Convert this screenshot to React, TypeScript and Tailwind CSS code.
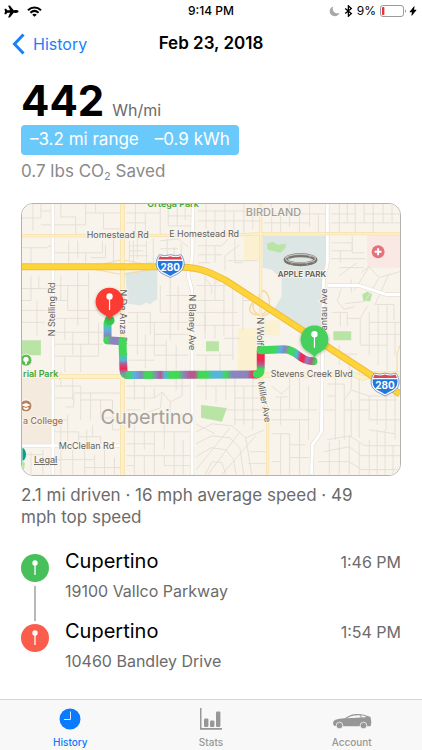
import React, { useState } from "react";
import { IoAirplane, IoMoon, IoFlash } from "react-icons/io5";

type Tab = "History" | "Stats" | "Account";

type Stop = {
  city: string;
  address: string;
  time: string;
  color: string;
};

const stops: Stop[] = [
  { city: "Cupertino", address: "19100 Vallco Parkway", time: "1:46 PM", color: "bg-[#47c05b]" },
  { city: "Cupertino", address: "10460 Bandley Drive", time: "1:54 PM", color: "bg-[#fc5c4b]" },
];

const StatusBar: React.FC = () => (
  <div className="grid h-[22px] grid-cols-[1fr_auto_1fr] items-center px-1 text-[12px]">
    <div className="flex items-center gap-2">
      <IoAirplane size={15} />
      <svg width="15" height="11" viewBox="0 0 15 11" fill="none" stroke="black" strokeWidth="2">
        <path d="M1 4.2C4.8.6 10.2.6 14 4.2" />
        <path d="M3.4 6.8c2.5-2.3 5.7-2.3 8.2 0" />
        <path d="M7.5 10.8 5.2 8.7c1.4-1.2 3.2-1.2 4.6 0z" fill="black" stroke="none" />
      </svg>
    </div>
    <div className="font-medium">9:14 PM</div>
    <div className="flex items-center justify-end gap-1">
      <IoMoon size={11} className="text-[#a8a8a8]" />
      <svg width="9" height="12" viewBox="0 0 9 12" fill="none" stroke="black" strokeWidth="1.3">
        <path d="M1.2 3.4 7.3 8.6 4.4 11.2V.8l2.9 2.6L1.2 8.6" />
      </svg>
      <span>9%</span>
      <div className="flex items-center gap-px">
        <svg width="27" height="12" viewBox="0 0 27 12">
          <rect x=".5" y=".5" width="23" height="11" rx="2.5" fill="none" stroke="#9a9a9a" />
          <rect x="2" y="2" width="2.4" height="8" rx=".8" fill="#e8333c" />
          <path d="M25 4.2c1.4.6 1.4 3 0 3.6z" fill="#9a9a9a" />
        </svg>
        <IoFlash size={10} />
      </div>
    </div>
  </div>
);

const PinGlyph: React.FC = () => (
  <svg width="8" height="16" viewBox="0 0 8 16">
    <circle cx="4" cy="3" r="2.7" fill="white" />
    <path d="M4 5v10" stroke="white" strokeWidth="1.3" />
    <path d="M3 3.6a1.2 1.2 0 0 1 .2-1.6" stroke="#ddd" strokeWidth=".5" fill="none" />
  </svg>
);

const MapPin: React.FC<{ x: number; y: number; color: string }> = ({ x, y, color }) => (
  <g transform={`translate(${x} ${y})`}>
    <path
      d="M0 19C-1.500 15-4 14.200-6.800 12.400A14 14 0 1 1 6.800 12.400C4 14.200 1.500 15 0 19z"
      fill={color}
      filter="url(#pinShadow)"
    />
    <circle cy="-5" r="3.200" fill="white" />
    <path d="M0-3V8.500" stroke="white" strokeWidth="1.200" />
  </g>
);

const Shield: React.FC<{ x: number; y: number }> = ({ x, y }) => (
  <g transform={`translate(${x} ${y})`}>
    <path
      d="M-11-11Q-5.500-9 0-11 5.500-9 11-11C15-5 15 1 11.500 5 8.500 8.500 4 9.500 0 12-4 9.500-8.500 8.500-11.500 5-15 1-15-5-11-11z"
      fill="white"
      stroke="#5e86c2"
      strokeWidth=".8"
    />
    <path d="M-10.500-9.500Q-5-7.800 0-9.500 5-7.800 10.500-9.500L12-6.200H-12z" fill="#d9475a" />
    <path d="M-12.400-4.800H12.400C13 0 11.500 3.500 8.500 5.600 5.500 7.500 3 8.500 0 10.300-3 8.500-5.500 7.500-8.500 5.600-11.500 3.500-13 0-12.400-4.800z" fill="#2277dc" />
    <text y="5" textAnchor="middle" fontSize="10" fontWeight="700" fill="white">280</text>
  </g>
);

// stops are [offset, color] pairs along the drawn direction
const RouteGradient: React.FC<{
  id: string;
  from: [number, number];
  to: [number, number];
  stops: [number, string][];
}> = ({ id, from, to, stops }) => (
  <linearGradient id={id} gradientUnits="userSpaceOnUse" x1={from[0]} y1={from[1]} x2={to[0]} y2={to[1]}>
    {stops.map(([offset, color]) => (
      <stop key={offset} offset={offset} stopColor={color} />
    ))}
  </linearGradient>
);

const G = "#3fd957";
const B = "#56b4e0";
const P = "#8c84be";
const M = "#b8588c";
const R = "#f02850";

const RouteMap: React.FC = () => (
  <svg
    viewBox="21 203 380 272"
    className="block h-auto w-full bg-[#f8f4ec]"
    role="img"
    aria-label="Map of the route through Cupertino"
    fontFamily="Inter, sans-serif"
  >
    <defs>
      <filter id="pinShadow" x="-30%" y="-30%" width="160%" height="160%">
        <feDropShadow dx="0" dy="1" stdDeviation="1.500" floodOpacity=".3" />
      </filter>
      <RouteGradient id="r1" from={[107, 316]} to={[107, 342]} stops={[[0, G], [0.25, G], [0.5, B], [0.75, P], [0.9, P], [1, G]]} />
      <RouteGradient id="r2" from={[106, 341]} to={[122, 341]} stops={[[0, G], [0.3, P], [0.8, P], [1, G]]} />
      <RouteGradient id="r3" from={[123, 338]} to={[123, 376]} stops={[[0, G], [0.4, G], [0.58, B], [0.68, M], [0.8, R], [0.92, P], [1, G]]} />
      <RouteGradient
        id="r4"
        from={[123, 375]}
        to={[261, 375]}
        stops={[[0, P], [0.03, G], [0.08, B], [0.13, P], [0.16, G], [0.2, G], [0.24, P], [0.27, M], [0.3, B], [0.34, G], [0.4, G], [0.44, P], [0.49, M], [0.52, M], [0.55, G], [0.6, G], [0.66, B], [0.7, B], [0.75, G], [0.79, P], [0.9, P], [0.95, R], [0.97, R], [1, G]]}
      />
      <RouteGradient id="r5" from={[261, 376]} to={[261, 347]} stops={[[0, G], [0.25, G], [0.4, M], [0.55, R], [0.75, R], [0.9, P], [1, G]]} />
      <RouteGradient id="r6" from={[261, 349]} to={[316, 362]} stops={[[0, G], [0.25, G], [0.33, B], [0.42, P], [0.5, G], [0.57, G], [0.65, B], [0.73, R], [0.78, R], [0.84, P], [0.92, M], [1, G]]} />
    </defs>

    {/* land areas */}
    <path d="M21 378H50V446H21z" fill="#f4ebde" />
    <path d="M125 272 157 267V299L153 301 150 304 146 302 140 305 127 303z" fill="#dbe6e5" />
    <path d="M263 235H328V265L323 276 325 328 302 328 274 309 282 296V278L272 269 263 267z" fill="#dbe6e5" />
    <path d="M244 235H260V260H244zM264 320H280V336L264 334zM238 328H259V372H238z" fill="#fbf0cf" />
    <path d="M368 233H401V267H368z" fill="#fae8e4" />
    <path
      d="M267 243 273 241 278 244 286 243 286 247 281 252 268 249zM363 294 368 291 373 294 371 301 364 300zM334 331H352V340H334zM206 341H219V351H206zM201 405 227 408 222 422 201 418zM21 340H40V355H21zM21 460 24 464 23 470H21z"
      fill="#b9e4a5"
    />

    {/* side streets */}
    <path
      fill="none"
      stroke="#e5e0d7"
      strokeWidth="1"
      d="M21 217H40V203M32 203V230M40 210H52M40 224H52M21 247H45L52 244M30 247V262M60 203V216H75V234M52 224H85V203M85 212H120M95 203V212M103 212V228H120M68 240V262M52 252H85V262M85 252H102V240M77 257V240M90 257H105V244M113 234V262M126 212H160V203M135 203V232M145 212V232M160 212V234M126 222H145M168 203V225H193M177 203V225M185 203V219M168 215H193M198 210H260M206 203V228M215 210V232M225 203V230M234 210V232M244 203V232M253 210V228M198 220H260M264 213H328M272 203V231M281 213V231M290 203V226M300 213V231M310 203V226M319 213V231M264 222H310M332 222H401M340 203V232M348 222V203M356 203V232M365 222V203M374 203V232M384 203V222M393 203V222M332 213H356M365 213H401"
    />
    <path
      fill="none"
      stroke="#e5e0d7"
      strokeWidth="1"
      d="M129 240V260M133 240V262M137 236V258M129 245H146M129 250H143M129 255H148M146 240V262H153M153 237V262M160 240 178 238 188 246M160 248H178M167 238V258M174 246V256M181 243V258M21 288H38V276M30 276V300H21M38 288H52M21 310H46M36 300V335M21 322H44M60 275V300M52 285H88M67 285V310H88M77 272V325M88 272V345M52 300H67M52 318H88M64 318V340M52 332H102M72 332V355M88 310H98M98 322V355M54 344H102M80 344V372M64 356V372M54 356H98M128 312H150V334M128 322H188M137 312V355M145 334V368M154 322V355M160 285V312H188M170 275V340M178 285V330M166 295H188M154 334H188M128 345H166M166 340V372M176 345V370M154 355H188M128 360H154M196 285H230M205 275V330M215 275V300M224 280V335M233 282V360M196 300H224M196 312H238M196 325H240M205 312V338M215 325V338M243 294V330M243 300H258M224 338H240M196 355H234M206 355V372M220 352V372"
    />
    <path
      fill="none"
      stroke="#e5e0d7"
      strokeWidth="1"
      d="M205 278Q214 285 211 294M215 283 223 275 232 281M225 270V255L240 244M198 245H222L228 238M206 238V262M198 254H222M215 245V262M235 238V262H243M228 260H258M198 262H210M332 242H353V250H332M353 235V252H365M341 250V262M332 258H366M340 267H365M340 275 358 262M362 272 370 266 380 277 401 271M370 266 355 290M380 277 366 301 346 303M390 273 376 304H395V320M352 279V292M342 288 338 301 345 309 356 306M333 312H348V326M341 312V326M348 318H361L368 306M361 318V345M370 312V355M379 305V365M388 305V370M370 322H401M370 334H401M361 345H388M396 322V355M340 345V365M350 355V372M332 354H358M360 372V400"
    />
    <path
      fill="none"
      stroke="#e5e0d7"
      strokeWidth="1"
      d="M54 386H80V420M60 372V386M72 377V400M54 398H72M74 393H120M80 400H112V430M73 393V407H65M90 393V420M100 400V418H120M60 425V442M67 415V442M54 432H78V446M54 420H67M86 430V446M78 437H100V446M92 425V437M112 430H120M60 446V475M72 450V475M84 450V475M94 455V475M104 450V475M114 458V475M54 460H94M84 468H120M30 452V475M42 450V475M21 455H42M126 386H190M134 377V400M144 386V410M126 398H154V388M154 398 162 392 160 408 148 412M162 392 170 402 182 396V377M170 402V415H190M176 377V390M126 410H140M126 432H190M134 420V475M144 432V450M154 432V475M164 425V450M174 432V475M183 440V475M126 444H154M126 456H190M144 456V475M164 456V466H190M126 466H134"
    />
    <path
      fill="none"
      stroke="#e5e0d7"
      strokeWidth="1"
      d="M196 386H258M206 377V400M216 386V403M226 377V400M235 378V425M244 386V425M253 380V430M235 398H264M226 410H264M235 420H266M196 432 212 424 232 426 246 438 252 475M196 444 212 436 230 438 240 448 244 475M196 457 211 448 226 450 234 460 236 475M205 475 212 462 222 463 226 475M196 470 230 428M208 475 240 432M222 475 256 436M196 424 215 434M246 438 265 430M250 452H266M248 464H266M272 386 282 394 290 386M276 397H288M272 410H290V377M281 397V425M272 420H310M290 410H318M300 377V410M309 386V440M272 434H290V475M281 434V475M300 420V475M290 445H306M290 458H310M272 462H281"
    />
    <path
      fill="none"
      stroke="#e5e0d7"
      strokeWidth="1"
      d="M328 384H345V440M328 396H336V377M336 396V440M345 400 352 390 370 396H398M352 390V377M352 400V438M360 400H398M360 400V438M370 396V420M378 400V425M387 396V430M396 390V440M325 410H336M345 410H370M370 420H401M328 440 350 436 366 446H401M325 452 350 447 362 456H401M319 462H350L362 470H401M330 442V475M340 440V475M350 436V475M360 443V475M370 440V475M378 430V475M386 430V475M394 446V475M370 430 396 434"
    />

    {/* white roads */}
    <g fill="none" stroke="#dedad2" strokeWidth="4">
      <path d="M52 203V475M21 446H121M193 203 192 256C192 265 187 268 188 275 189 282 192 285 192 293V475M328 203V260C328 270 324 272 324 282L322 432 313 445 312 475M328 285H360L387 294H401" />
    </g>
    <g fill="none" stroke="white" strokeWidth="3">
      <path d="M52 203V475M21 446H121M193 203 192 256C192 265 187 268 188 275 189 282 192 285 192 293V475M328 203V260C328 270 324 272 324 282L322 432 313 445 312 475M328 285H360L387 294H401" />
    </g>

    {/* avenues */}
    <g fill="none" stroke="#f5d9a4">
      <path strokeWidth="3" d="M21 235H122L240 234 260 233H401M261 203V375C261 390 268 405 268 420V475" />
      <path strokeWidth="5" d="M50 376.500H122L261 375H355L364 378 374 374H401M122 203V475" />
      <path strokeWidth="1" d="M90 266 122 259 156 266M90 268 122 274 156 268M401 345 398 354V372" />
      <path strokeWidth="1.500" d="M253 302C246 310 252 316 261 314 272 312 272 294 264 290 256 294 259 300 270 306 272 312 266 318 258 314 252 310 250 300 261 296" />
    </g>
    <g fill="none" stroke="#fdf0c4">
      <path strokeWidth="2" d="M21 235H122L240 234 260 233H401M261 203V375C261 390 268 405 268 420V475" />
      <path strokeWidth="4" d="M50 376.500H122L261 375H355L364 378 374 374H401M122 203V475" />
    </g>

    {/* interstate */}
    <path d="M21 266H170C200 266 207 270 226 280L401 394" fill="none" stroke="#f2bc35" strokeWidth="7" />
    <path d="M21 266H170C200 266 207 270 226 280L401 394" fill="none" stroke="#fdd53a" strokeWidth="5" />

    {/* road labels */}
    <g fontSize="9" fill="#62615f" stroke="#f8f4ec" strokeWidth="2" paintOrder="stroke">
      <text x="86" y="237">Homestead Rd</text>
      <text x="169" y="236">E Homestead Rd</text>
      <text x="58" y="449">McClellan Rd</text>
      <text x="271" y="377">Stevens Creek Blvd</text>
      <text transform="translate(54 336) rotate(-90)">N Stelling Rd</text>
      <text transform="translate(120 289) rotate(90)">N De Anza Blvd</text>
      <text transform="translate(189 294) rotate(90)">N Blaney Ave</text>
      <text transform="translate(257 317) rotate(90)">N Wolfe</text>
      <text transform="translate(258 382) rotate(80)">Miller Ave</text>
      <text transform="translate(328 330) rotate(-90)">antau Ave</text>
    </g>

    {/* places */}
    <g stroke="#f8f4ec" strokeWidth="2" paintOrder="stroke">
      <text x="147" y="206" fontSize="9" fontWeight="600" fill="#3fa535">Ortega Park</text>
      <text x="246" y="215" fontSize="11" fontWeight="500" fill="#a19e99">BIRDLAND</text>
      <text x="100" y="424" fontSize="20" fill="#a3a19d">Cupertino</text>
      <text x="22" y="377" fontSize="9" fontWeight="600" fill="#3fa535">rial Park</text>
      <text x="22" y="424" fontSize="9" fontWeight="500" fill="#a8714b">a College</text>
      <text x="278" y="276" fontSize="8" fontWeight="600" fill="#5f5c59">APPLE PARK</text>
    </g>

    <ellipse cx="301" cy="259" rx="15" ry="4.500" fill="none" stroke="#77736d" strokeWidth="4" />
    <ellipse cx="301" cy="258" rx="15" ry="4.300" fill="none" stroke="#c4c0b9" strokeWidth="1.200" />
    <path d="M286 256 290 258M312 255 309 257M291 264 294 261M308 264 306 261M315 262 312 260" stroke="#c4c0b9" strokeWidth=".8" />

    <circle cx="379" cy="251" r="6.500" fill="#e4717b" />
    <path d="M379 247.500V254.500M375.500 251H382.500" stroke="white" strokeWidth="2" />

    <circle cx="25" cy="360" r="6" fill="#5fb850" stroke="white" strokeWidth=".8" />
    <path d="M25 356.500a2.800 2.800 0 0 0-1 5.400V364h2v-2.100a2.800 2.800 0 0 0-1-5.400z" fill="white" />
    <circle cx="25" cy="406" r="6" fill="#b9815a" stroke="white" strokeWidth=".8" />
    <path d="M20.500 405 25 403 29.500 405 25 407zM22.500 407 25 408.200 27.500 407V409L25 410.200 22.500 409z" fill="white" />
    <path d="M21 447C27 450 27 460 21 462z" fill="#139c84" stroke="white" strokeWidth=".8" />

    <Shield x={170} y={265} />
    <Shield x={386} y={384} />

    {/* driven route */}
    <g fill="none" strokeWidth="8" strokeLinecap="round" strokeLinejoin="round">
      <path d="M109 319 107 323 107 340" stroke="url(#r1)" />
      <path d="M107 340 121 341" stroke="url(#r2)" />
      <path d="M122 341 123 370Q123 375 128 375" stroke="url(#r3)" />
      <path d="M127 375 257 374.500" stroke="url(#r4)" />
      <path d="M257 374Q261 374 261 368V351" stroke="url(#r5)" />
      <path d="M261 350 284 349C298 349 299 361 314 361" stroke="url(#r6)" />
    </g>
    <circle cx="109" cy="320" r="5" fill="#36c84f" />
    <MapPin x={109} y={301} color="#fc3b33" />
    <MapPin x={315} y={339} color="#47cf5d" />
  </svg>
);

const HistoryIcon: React.FC = () => (
  <svg width="22" height="22" viewBox="0 0 22 22">
    <circle cx="11" cy="11" r="10.500" fill="currentColor" />
    <path d="M11.500 3.500V11.500H5" fill="none" stroke="#dcecff" strokeWidth="1" />
  </svg>
);

const StatsIcon: React.FC = () => (
  <svg width="24" height="22" viewBox="0 0 24 22" fill="currentColor">
    <path d="M1 0H2.500V20H23V21.800H1z" />
    <rect x="5" y="10.500" width="4.400" height="8.500" rx="1.200" />
    <rect x="11" y="12.500" width="4.400" height="6.500" rx="1.200" />
    <rect x="17" y="3.500" width="4.400" height="15.500" rx="1.200" />
  </svg>
);

const CarIcon: React.FC = () => (
  <svg width="40" height="22" viewBox="0 0 40 22">
    <path
      d="M1.200 16.500C.8 14.500 1.500 12.500 3.500 11.800 6 10.800 9 10.500 13 10.200 17 7.500 20 6 26 6 31 6 35 7.500 38.500 9L39 12C39.500 14 39.300 16.500 38.500 18.200H12L2.500 18z"
      fill="currentColor"
    />
    <path d="M15 10.300C18.500 8 21.500 7.200 27.500 7.200L29 9.600z" fill="#f8f8f8" />
    <path d="M28.500 7.200C31 7.400 33 8 35 9L30.200 9.500z" fill="#f8f8f8" />
    <circle cx="7.500" cy="17.500" r="3.300" fill="currentColor" stroke="#f8f8f8" strokeWidth=".8" />
    <circle cx="31.500" cy="17.500" r="3.300" fill="currentColor" stroke="#f8f8f8" strokeWidth=".8" />
  </svg>
);

const tabs: { name: Tab; icon: React.ReactNode }[] = [
  { name: "History", icon: <HistoryIcon /> },
  { name: "Stats", icon: <StatsIcon /> },
  { name: "Account", icon: <CarIcon /> },
];

const App: React.FC = () => {
  const [activeTab, setActiveTab] = useState<Tab>("History");

  return (
    <div className="flex min-h-screen flex-col bg-white font-['Inter',sans-serif] text-black">
      <header>
        <StatusBar />
        <div className="grid h-[43px] grid-cols-[1fr_auto_1fr] items-center px-3">
          <button type="button" className="flex items-center gap-2 text-[16px] text-[#1a7ffb]">
            <svg width="13" height="22" viewBox="0 0 13 22" fill="none" stroke="currentColor" strokeWidth="3">
              <path d="M11.500 1.500 2.500 11 11.500 20.500" />
            </svg>
            History
          </button>
          <h1 className="text-[17px] font-semibold">Feb 23, 2018</h1>
        </div>
      </header>

      <main className="flex-1 px-[21px] pt-4">
        <div className="flex items-baseline gap-2">
          <span className="text-[42px] font-bold leading-10">442</span>
          <span className="text-[16px] leading-4 text-[#6b6b6b]">Wh/mi</span>
        </div>
        <div className="mt-1 flex h-[30px] w-fit items-center gap-4 rounded bg-[#69c9fb] px-[9px] text-[17px] text-white">
          <span>–3.2 mi range</span>
          <span>–0.9 kWh</span>
        </div>
        <p className="mt-1 text-[17px] leading-6 text-[#8a8a8a]">
          0.7 lbs CO<sub className="text-[11px]">2</sub> Saved
        </p>

        <div className="relative mt-5 overflow-hidden rounded-xl border border-[#b5b2ad]">
          <RouteMap />
          <a href="#legal" className="absolute bottom-2 left-3 text-[9px] font-medium text-[#6f6d69] underline">
            Legal
          </a>
        </div>

        <p className="mt-2 pr-5 text-[17px] leading-[22px] text-[#6b6b6b]">
          2.1 mi driven · 16 mph average speed · 49 mph top speed
        </p>

        <ol className="mt-[17px]">
          {stops.map((stop, index) => (
            <li key={stop.address} className="flex h-[70px] gap-4">
              <div className="flex flex-col items-center gap-1 pt-[9px]">
                <span className={`flex size-7 shrink-0 items-center justify-center rounded-full ${stop.color}`}>
                  <PinGlyph />
                </span>
                {index < stops.length - 1 && <span className="h-[35px] w-[2px] shrink-0 bg-[#b8b8b8]" />}
              </div>
              <div className="flex-1">
                <div className="flex items-baseline justify-between">
                  <h2 className="text-[20px] leading-8">{stop.city}</h2>
                  <time className="text-[16px] text-[#6b6b6b]">{stop.time}</time>
                </div>
                <p className="text-[16px] leading-7 text-[#6b6b6b]">{stop.address}</p>
              </div>
            </li>
          ))}
        </ol>
      </main>

      <nav className="grid grid-cols-3 border-t border-[#d4d4d4] bg-[#f8f8f8] pt-2">
        {tabs.map((tab) => (
          <button
            key={tab.name}
            type="button"
            onClick={() => setActiveTab(tab.name)}
            className={`flex flex-col items-center gap-1 text-[10px] font-medium leading-4 ${
              activeTab === tab.name ? "text-[#0a7aff]" : "text-[#979797]"
            }`}
          >
            {tab.icon}
            {tab.name}
          </button>
        ))}
      </nav>
    </div>
  );
};

export default App;
